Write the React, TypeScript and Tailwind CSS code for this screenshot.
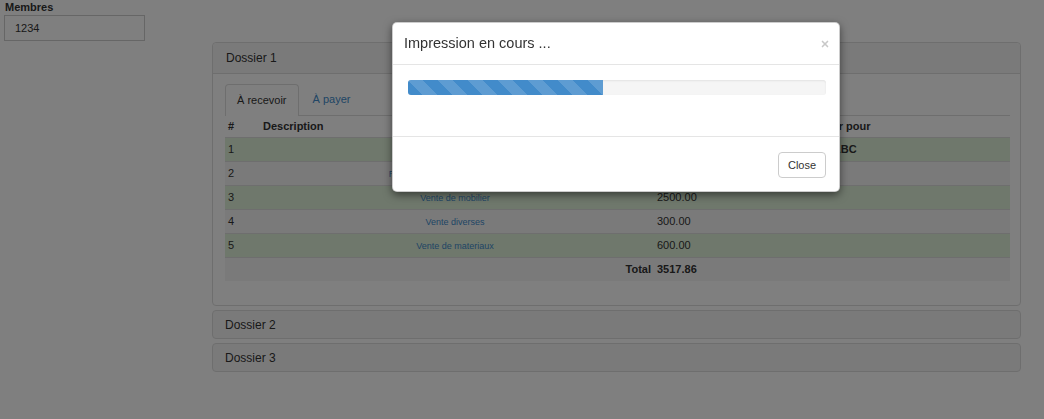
import { X } from 'lucide-react';

interface Row {
  id: number;
  label: string;
  amount: string;
  payer?: string;
  success: boolean;
}

const rows: Row[] = [
  { id: 1, label: 'Vente de fournitures', amount: '100.00', payer: 'Ste ABC', success: true },
  { id: 2, label: 'Remboursement de frais postaux', amount: '17.86', success: false },
  { id: 3, label: 'Vente de mobilier', amount: '2500.00', success: true },
  { id: 4, label: 'Vente diverses', amount: '300.00', success: false },
  { id: 5, label: 'Vente de materiaux', amount: '600.00', success: true },
];

function ClosedPanel({ title }: { title: string }) {
  return (
    <div className="rounded-[4px] border border-[#ddd] bg-[#f5f5f5]">
      <div className="flex h-[27px] items-center pl-[12px] text-[12px]">{title}</div>
    </div>
  );
}

export default function App() {
  return (
    <div className="relative min-h-screen bg-white font-['Liberation_Sans',Arial,sans-serif] text-[#333]">
      <div className="pl-[4px]">
        <div className="h-[14px] pl-[1px] pt-[1px] text-[11px] font-bold leading-[12px]">Membres</div>
        <div className="mt-[1px] flex h-[26px] w-[141px] items-center border border-[#ccc] pl-[10px] text-[11px]">
          1234
        </div>
      </div>

      <div className="ml-[212px] mt-[1px] flex w-[809px] flex-col gap-[4px]">
        <div className="rounded-[4px] border border-[#ddd] bg-white">
          <div className="flex h-[31px] items-center rounded-t-[4px] border-b border-[#ddd] bg-[#f5f5f5] pl-[13px] text-[12px]">
            Dossier 1
          </div>
          <div className="pb-[24px] pl-[12px] pr-[10px] pt-[10px]">
            <div className="flex h-[32px] border-b border-[#ddd] text-[11px]">
              <div className="flex h-[32px] items-center rounded-t-[4px] border border-b-0 border-[#ddd] bg-white px-[11px]">
                À recevoir
              </div>
              <div className="ml-[2px] flex items-center px-[12px] text-[#428bca]">À payer</div>
            </div>
            <table className="w-full border-collapse text-[11px]">
              <thead>
                <tr className="h-[21px] text-left font-bold">
                  <th className="w-[33px] pl-[3px] font-bold">#</th>
                  <th className="w-[394px] pl-[5px] font-bold">Description</th>
                  <th className="w-[156px] pl-[5px] font-bold">Montant</th>
                  <th className="pl-[5px] font-bold">Payer pour</th>
                </tr>
              </thead>
              <tbody>
                {rows.map((r) => (
                  <tr key={r.id} className={r.success ? 'bg-[#dff0d8]' : 'bg-[#f5f5f5]'}>
                    <td className="h-[24px] border-t border-[#ddd] pl-[3px]">{r.id}</td>
                    <td className="border-t border-[#ddd] px-[5px] pt-[3px] text-center text-[9px] text-[#428bca]">
                      {r.label}
                    </td>
                    <td className="border-t border-[#ddd] pl-[5px]">{r.amount}</td>
                    <td className="border-t border-[#ddd] pl-[5px] font-bold">{r.payer ?? ''}</td>
                  </tr>
                ))}
                <tr className="bg-[#f5f5f5] font-bold">
                  <td className="h-[24px] border-t border-[#ddd]" />
                  <td className="border-t border-[#ddd] pr-[1px] text-right">Total</td>
                  <td className="border-t border-[#ddd] pl-[5px]">3517.86</td>
                  <td className="border-t border-[#ddd]" />
                </tr>
              </tbody>
            </table>
          </div>
        </div>
        <ClosedPanel title="Dossier 2" />
        <ClosedPanel title="Dossier 3" />
      </div>

      <div className="fixed inset-0 bg-black/50" />

      <div className="absolute left-[392px] top-[22px] w-[448px] rounded-[5px] border border-black/20 bg-white shadow-[0_3px_9px_rgba(0,0,0,0.5)]">
        <div className="flex h-[42px] items-center justify-between border-b border-[#e5e5e5] pl-[11px] pr-[9px]">
          <span className="text-[14.5px]">Impression en cours ...</span>
          <X className="h-[10px] w-[10px] text-[#c8c8c8]" strokeWidth={4} />
        </div>
        <div className="h-[71px] pl-[15px] pr-[13px] pt-[15px]">
          <div className="h-[15px] overflow-hidden rounded-[3px] bg-[#f5f5f5] shadow-[inset_0_1px_2px_rgba(0,0,0,0.08)]">
            <div
              className="h-full bg-[#428bca] bg-[linear-gradient(45deg,rgba(255,255,255,.15)_25%,transparent_25%,transparent_50%,rgba(255,255,255,.15)_50%,rgba(255,255,255,.15)_75%,transparent_75%,transparent)] bg-[length:30px_30px]"
              style={{ width: '46.6%' }}
            />
          </div>
        </div>
        <div className="flex h-[55px] items-start justify-end border-t border-[#e5e5e5] pr-[13px] pt-[15px]">
          <button className="h-[26px] w-[48px] rounded-[4px] border border-[#ccc] bg-white text-[11px] text-[#333]">
            Close
          </button>
        </div>
      </div>
    </div>
  );
}
